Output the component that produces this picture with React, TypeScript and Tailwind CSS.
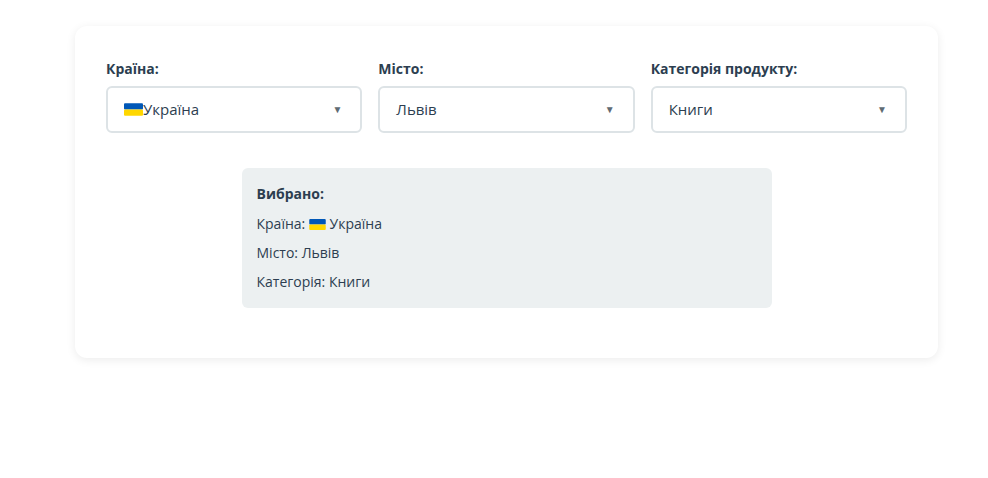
const Flag = ({ className }: { className?: string }) => (
	<svg viewBox="0 0 18 12" className={className}>
		<rect width="18" height="6" fill="#0057b7" rx="1" />
		<rect y="6" width="18" height="6" fill="#ffd700" rx="1" />
	</svg>
)

const Select = ({ label, children }: { label: string; children: React.ReactNode }) => (
	<div className="flex flex-col">
		<label className="text-[14px] font-bold text-[#2c3e50] mb-[8px] leading-[18px]">{label}</label>
		<div className="h-[47px] border-2 border-[#dde3e6] rounded-[6px] bg-white flex items-center justify-between pl-[16px] pr-[18px] text-[15px] text-[#2c3e50]">
			<span className="flex items-center">{children}</span>
			<span className="text-[10px] text-[#5f6b73]">▼</span>
		</div>
	</div>
)

export default function App() {
	return (
		<div className="w-[988px] h-[478px] bg-white pt-[26px] pl-[75px]" style={{ fontFamily: '"Open Sans", sans-serif' }}>
			<div className="w-[863px] h-[332px] rounded-[12px] bg-white shadow-[0_2px_10px_rgba(0,0,0,0.08)] px-[31px] pt-[34px]">
				<div className="grid grid-cols-3 gap-[16px]">
					<Select label="Країна:">
						<Flag className="w-[19px] h-[13px]" />
						Україна
					</Select>
					<Select label="Місто:">Львів</Select>
					<Select label="Категорія продукту:">Книги</Select>
				</div>
				<div className="mx-auto mt-[35px] w-[530px] h-[140px] rounded-[6px] bg-[#ecf0f1] px-[15px] pt-[16px] text-[14px] text-[#2c3e50]">
					<div className="font-bold leading-[20px] mb-[10px]">Вибрано:</div>
					<div className="leading-[20px] mb-[9px] flex items-center">
						Країна:&nbsp;<Flag className="w-[17px] h-[11px]" />&nbsp;Україна
					</div>
					<div className="leading-[20px] mb-[9px]">Місто: Львів</div>
					<div className="leading-[20px]">Категорія: Книги</div>
				</div>
			</div>
		</div>
	)
}
